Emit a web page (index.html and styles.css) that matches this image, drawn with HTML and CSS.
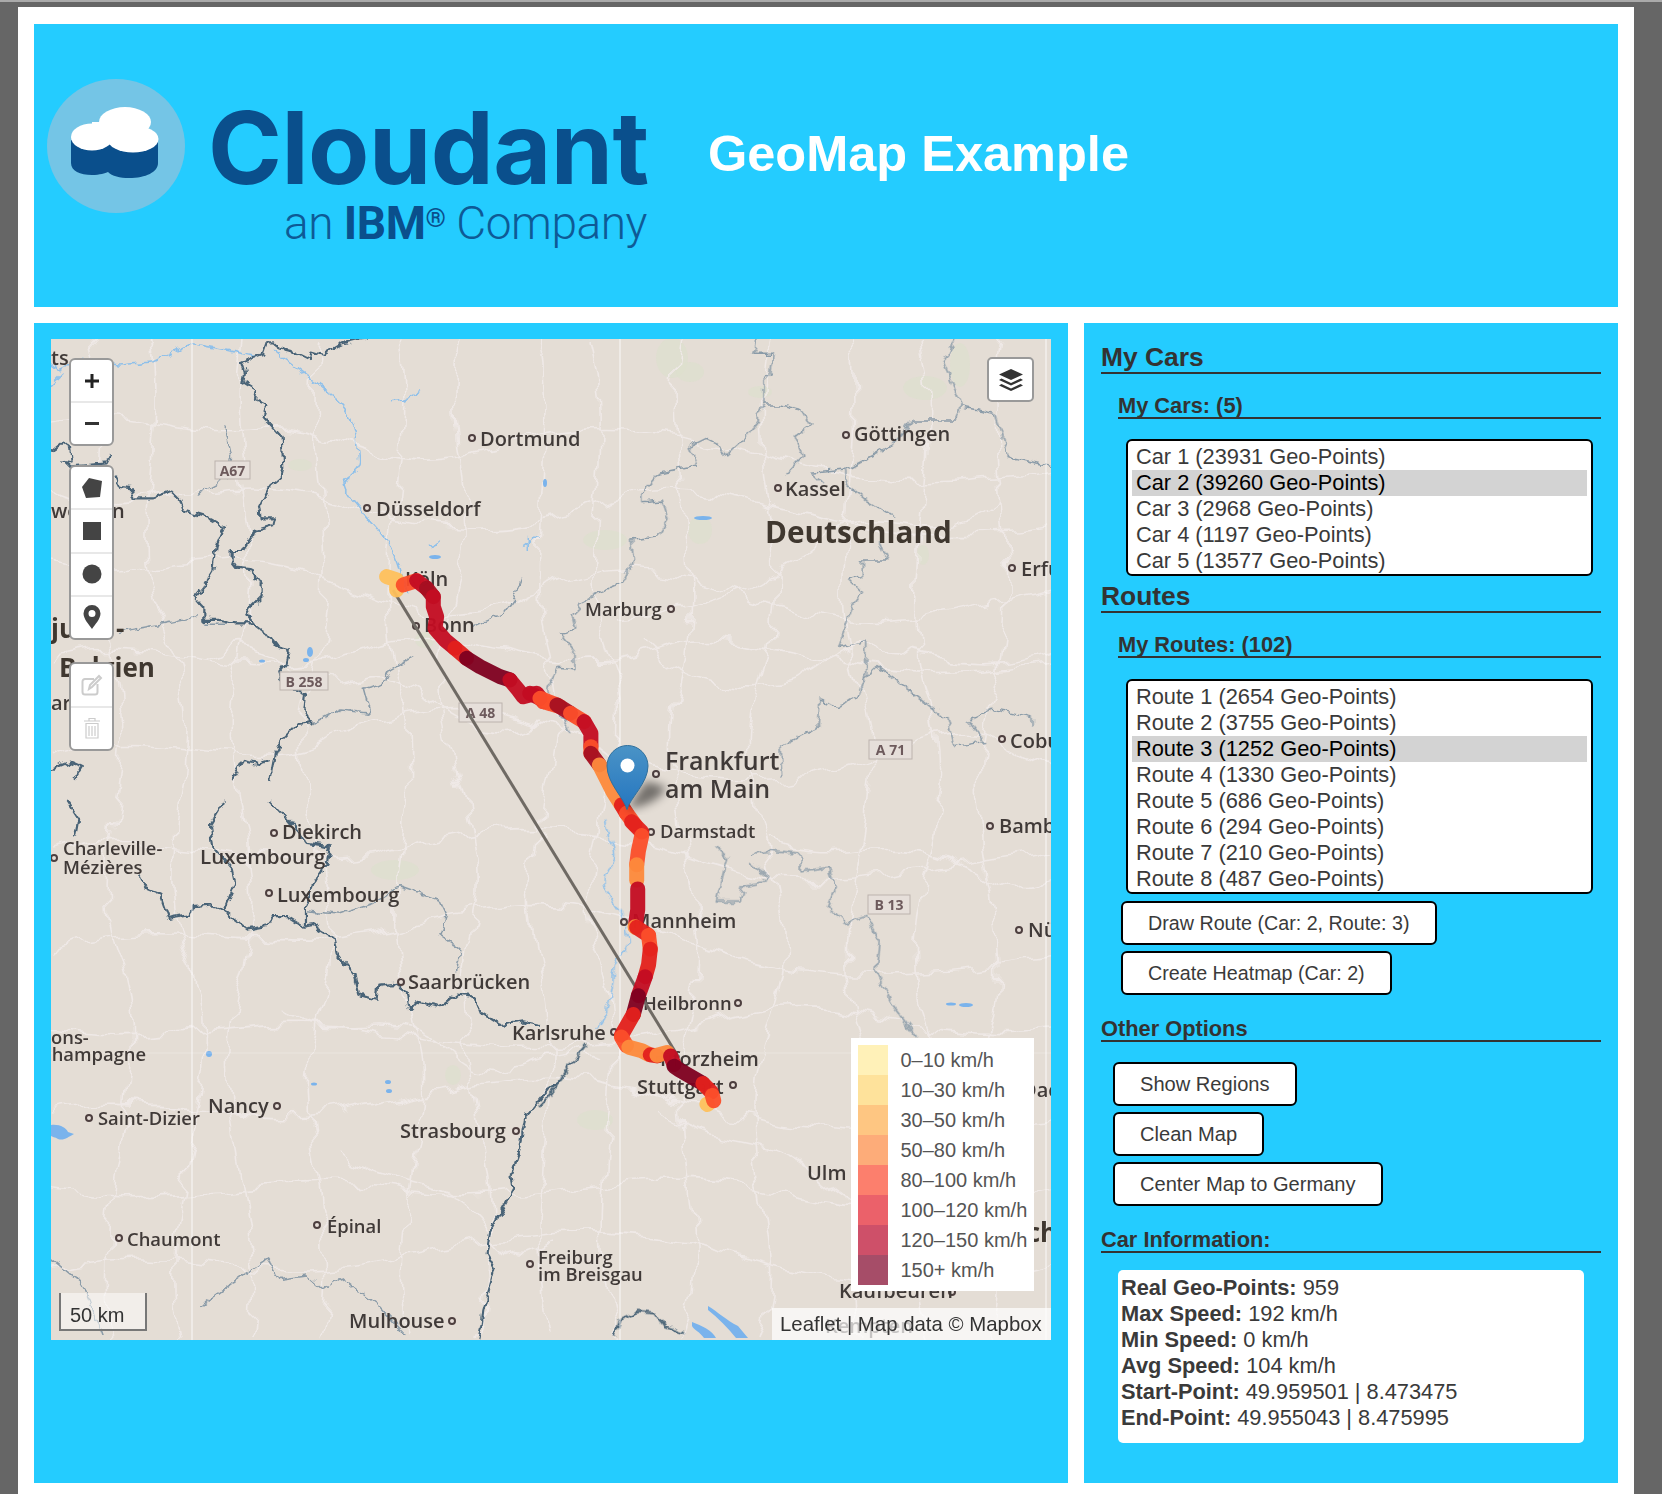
FILE: index.html
```html
<html>
<head>
    <title>Cloudant GeoMap Example</title>
    <link rel="stylesheet" href="styles.css">
</head>
<body>
<div class="page">
    <header class="banner">
        <svg class="logo" viewBox="34 24 674 283" width="674" height="283">
            <ellipse cx="116" cy="146" rx="69" ry="67" fill="#74c5e6"/>
            <path d="M71 140V163C71 171 80 175 92 175C100 175 105 173 108 172C112 176 120 178 129 178C146 178 158 172 158 163V140Z" fill="#0a4f8c"/>
            <ellipse cx="125" cy="122" rx="26" ry="15" fill="#fff"/>
            <ellipse cx="92" cy="137" rx="21" ry="13.500" fill="#fff"/>
            <ellipse cx="133" cy="139" rx="25.500" ry="13.500" fill="#fff"/>
            <rect x="92" y="122" width="40" height="22" fill="#fff"/>
            <text class="logo-name" x="208" y="184">Cloudant</text>
            <text class="logo-sub" x="284" y="239">an <tspan class="logo-ibm">IBM</tspan><tspan class="logo-reg" dy="-12">®</tspan><tspan dy="12"> Company</tspan></text>
        </svg>
        <h1 class="title">GeoMap Example</h1>
    </header>

    <div class="content">
        <section class="map-panel">
            <div class="map">
                <svg class="tiles" viewBox="51 339 1000 1001" width="1000" height="1001">
                    <defs>
                        <filter id="wiggle" x="-5%" y="-5%" width="110%" height="110%">
                            <feTurbulence type="fractalNoise" baseFrequency=".11" numOctaves="2" seed="4"/>
                            <feDisplacementMap in="SourceGraphic" scale="9" xChannelSelector="R" yChannelSelector="G"/>
                        </filter>
                        <filter id="wander" x="-5%" y="-5%" width="110%" height="110%">
                            <feTurbulence type="fractalNoise" baseFrequency=".035" numOctaves="2" seed="9"/>
                            <feDisplacementMap in="SourceGraphic" scale="26" xChannelSelector="R" yChannelSelector="G"/>
                        </filter>
                    </defs>
                    <rect x="51" y="339" width="1000" height="1001" fill="#e4ddd5"/>

                    <g class="green">
                        <ellipse cx="672" cy="358" rx="16" ry="20"/>
                        <ellipse cx="690" cy="372" rx="14" ry="10"/>
                        <ellipse cx="760" cy="392" rx="12" ry="6"/>
                        <ellipse cx="925" cy="388" rx="22" ry="12"/>
                        <ellipse cx="960" cy="365" rx="10" ry="22"/>
                        <ellipse cx="700" cy="530" rx="12" ry="14"/>
                        <ellipse cx="605" cy="540" rx="22" ry="10"/>
                        <ellipse cx="923" cy="555" rx="6" ry="10"/>
                        <ellipse cx="300" cy="465" rx="12" ry="6"/>
                        <ellipse cx="425" cy="640" rx="10" ry="8"/>
                        <ellipse cx="395" cy="870" rx="24" ry="10"/>
                        <ellipse cx="453" cy="1075" rx="8" ry="10"/>
                        <ellipse cx="595" cy="1120" rx="18" ry="10"/>
                    </g>

                    <g class="roads" filter="url(#wander)">
                        <path d="M51 420C120 405 190 440 260 430S380 480 470 455 600 420 700 440 860 500 1053 470"/>
                        <path d="M51 490C110 520 230 470 330 500S500 540 610 500 820 560 1053 530"/>
                        <path d="M51 560C130 590 220 540 300 570S440 640 520 600 640 560 760 600 900 620 1053 590"/>
                        <path d="M51 660C140 630 250 690 360 650S540 690 650 650 830 700 1053 660"/>
                        <path d="M51 760C150 720 240 780 330 740S480 700 560 730 720 810 860 760 980 740 1053 770"/>
                        <path d="M51 850C150 820 290 880 390 850S590 820 700 860 900 870 1053 850"/>
                        <path d="M51 950C160 910 280 960 390 930S560 890 660 930 830 990 1053 960"/>
                        <path d="M51 1030C150 1050 260 1010 370 1030S590 1060 720 1020 900 1050 1053 1030"/>
                        <path d="M51 1110C140 1090 250 1130 350 1110S530 1060 640 1090 840 1150 1053 1120"/>
                        <path d="M51 1190C170 1210 290 1170 400 1190S640 1160 760 1190 940 1210 1053 1190"/>
                        <path d="M51 1270C170 1240 270 1290 390 1260S620 1220 720 1250 900 1300 1053 1260"/>
                        <path d="M90 339C120 450 70 560 110 660S80 860 120 960 90 1200 110 1339"/>
                        <path d="M150 339C170 440 120 540 170 640S140 860 190 960 150 1200 180 1339"/>
                        <path d="M240 339C220 450 270 540 240 660S280 860 240 980 270 1200 250 1339"/>
                        <path d="M320 339C300 450 350 560 310 680S360 900 320 1010 350 1220 320 1339"/>
                        <path d="M400 339C420 450 370 560 400 680S370 900 410 1010 380 1220 410 1339"/>
                        <path d="M460 339C440 430 490 520 450 620S500 820 470 930 520 1180 480 1339"/>
                        <path d="M540 339C560 450 520 560 550 660S510 840 540 960 520 1200 550 1339"/>
                        <path d="M590 339C620 450 570 560 610 660S560 840 600 960 570 1200 620 1339"/>
                        <path d="M680 339C660 450 710 560 680 680S720 900 690 1020 720 1240 680 1339"/>
                        <path d="M770 339C740 460 800 560 760 680S820 900 770 1020 800 1240 760 1339"/>
                        <path d="M850 339C870 460 820 570 860 690S820 910 860 1030 830 1240 860 1339"/>
                        <path d="M920 339C950 450 890 580 930 700S880 920 930 1030 890 1230 930 1339"/>
                        <path d="M1000 339C980 460 1030 580 990 700S1020 920 990 1030 1020 1230 990 1339"/>
                        <path d="M620 620C700 610 760 590 820 540S930 560 1000 500"/>
                        <path d="M640 640C700 700 780 700 830 660S950 690 1053 650"/>
                        <path d="M210 660C260 620 300 700 360 680S460 760 540 720"/>
                        <path d="M770 840C830 870 880 830 950 860S1010 900 1053 880"/>
                        <path d="M660 1110C700 1150 760 1130 810 1170S870 1220 910 1200"/>
                        <path d="M280 1010C330 1050 400 1000 450 1050S540 1030 600 1060"/>
                        <path d="M340 1150C380 1190 440 1170 480 1220S520 1260 560 1240"/>
                    </g>

                    <g class="lakes">
                        <path d="M51 1125C60 1124 66 1128 68 1132L74 1134C68 1137 64 1141 58 1139C55 1137 52 1137 51 1136Z"/>
                        <path d="M708 1306C718 1312 726 1320 738 1326L748 1338H736C728 1328 718 1318 708 1310Z"/>
                        <path d="M692 1322C702 1326 712 1330 716 1338H704C700 1332 694 1330 692 1326Z"/>
                        <ellipse cx="209" cy="1054" rx="3" ry="3"/>
                        <ellipse cx="314" cy="1084" rx="3" ry="1.500"/>
                        <ellipse cx="388" cy="1082" rx="3" ry="2"/>
                        <ellipse cx="389" cy="1091" rx="3" ry="2"/>
                        <ellipse cx="951" cy="1004" rx="5" ry="1.500"/>
                        <ellipse cx="966" cy="1005" rx="7" ry="2"/>
                        <ellipse cx="310" cy="652" rx="3" ry="5"/>
                        <ellipse cx="306" cy="660" rx="3" ry="2"/>
                        <ellipse cx="262" cy="661" rx="3" ry="1.500"/>
                        <ellipse cx="703" cy="518" rx="9" ry="2"/>
                        <ellipse cx="545" cy="483" rx="2" ry="4"/>
                        <ellipse cx="435" cy="557" rx="6" ry="2"/>
                    </g>

                    <g filter="url(#wiggle)">
                        <g class="rivers" transform="translate(40 330) scale(.3333)">
                            <path d="M700 60C760 110 820 150 880 200S950 300 950 340 975 410 925 440 980 550 1030 620 1075 700 1100 790"/>
                            <path d="M33 100L60 120 120 90 240 105 340 95 450 40 560 60 650 80"/>
                            <path d="M30 170L70 130"/>
                            <path d="M1050 215C1080 215 1110 205 1140 185"/>
                            <path d="M1170 650C1185 648 1200 640 1205 635"/>
                            <path d="M1450 650L1490 620M1465 620V660"/>
                        </g>
                        <g class="rivers" transform="translate(540 820) scale(.3393 .3444)">
                            <path d="M190 0C200 70 240 100 200 150S240 250 250 300 270 360 240 390 220 450 210 500 190 570 170 600"/>
                        </g>
                        <g class="state" transform="translate(540 330) scale(.3393 .3333)">
                            <path d="M640 30L630 70 690 70 680 130 660 150 660 225 640 260 640 280 610 320 550 375 520 340 490 325 440 350 465 405 350 430 300 490 300 515 360 510 380 570 350 620 270 630 275 690 240 760 155 795 95 855 105 900 60 910 100 960 100 1020 55 1015 30 1060"/>
                            <path d="M660 225L710 225 770 240 795 285 750 320 775 380 730 430"/>
                            <path d="M1220 30L1190 100 1240 220 1225 270 1100 270 1040 345 900 420 800 430 830 460"/>
                            <path d="M900 420L910 470 960 510 1040 560"/>
                            <path d="M1240 230L1340 250 1380 380 1510 410"/>
                            <path d="M1000 640L1025 690 950 690 950 740 910 750 950 790 920 830 880 950 960 935 960 1040 990 1010 1100 1090 1200 1170 1220 1250 1310 1235 1260 1170 1330 1135 1450 1160 1450 1190"/>
                            <path d="M960 1040L940 1090 880 1130 825 1110 820 1190 710 1250 715 1340"/>
                            <path d="M30 1060C10 1100 60 1140 90 1210"/>
                        </g>
                        <g class="state" transform="translate(540 820) scale(.3393 .3444)">
                            <path d="M620 100L680 90 770 100 770 150 850 140 870 200 850 250 900 300 960 280 1000 350 990 440 1040 540 1110 630"/>
                            <path d="M620 125L670 160 660 180 600 190 590 235 520 235 550 110 520 80"/>
                        </g>
                        <g class="state" transform="translate(40 330) scale(.3333)">
                            <path d="M555 290L575 380 565 440 470 490"/>
                            <path d="M1445 745L1420 810 1390 850 1300 890"/>
                            <path d="M1120 980L1050 1020 1030 1060 970 1075 990 1150 900 1140 820 1180"/>
                            <path d="M490 880L640 880M240 905L350 885 470 860"/>
                        </g>
                        <g class="state" transform="translate(40 800) scale(.3333 .3571)">
                            <path d="M800 310L900 320 1000 290 1080 240 1200 280 1220 320 1200 380 1260 420 1250 480"/>
                            <path d="M35 1285L120 1350 150 1400 190 1500"/>
                            <path d="M480 1420L580 1350 680 1285 720 1340 800 1330 850 1370 900 1335 1010 1410 1100 1500"/>
                        </g>

                        <g class="border" transform="translate(40 330) scale(.3333)">
                            <path d="M605 95L615 130 610 155 650 180 645 210 680 225 670 260 725 320 730 410 725 440 690 470 660 530 665 565 705 565 700 585 650 600 610 660 575 660 575 690 590 710 635 715 640 745 665 760 665 800 635 830 620 855 640 880 680 910 710 950 750 960 740 1000 715 1030 725 1060 795 1090 790 1140 815 1180 770 1185 725 1230 705 1270 690 1350"/>
                            <path d="M605 95L670 70 680 40 700 40 720 55 760 65 810 90 815 65 850 75 900 45 950 32 980 30"/>
                            <path d="M225 440L240 470 275 475 285 505 340 505 395 485 420 510 430 540 510 565 555 590 530 650 520 720 490 770 465 800 490 830 490 870 540 870 590 880 640 880"/>
                            <path d="M33 365L70 335 90 350 95 395 70 390 90 410 200 400 215 370"/>
                            <path d="M30 1320L90 1295 125 1310 100 1350"/>
                            <path d="M575 1350L610 1290 660 1300 690 1290"/>
                        </g>
                        <g class="border" transform="translate(40 800) scale(.3333 .3571)">
                            <path d="M80 0L115 50 105 105"/>
                            <path d="M555 0L510 70 520 130 575 190 585 230 555 300 550 310 620 360 680 350 700 325 740 325 790 355 820 350 880 385 890 430 940 490 955 545 1010 560 1015 520 1060 515 1100 540 1110 585 1130 565 1200 580 1250 545 1300 550 1320 595 1380 630 1450 620 1500 630"/>
                            <path d="M300 215L320 250 360 265 385 330 450 320 460 300 520 295 550 310"/>
                            <path d="M690 0L730 40 800 120 870 130 860 180 820 235 795 300 795 355"/>
                            <path d="M1560 790L1520 815 1455 890 1440 980 1415 1050 1420 1090 1350 1210 1340 1270 1365 1310 1330 1430 1325 1470 1315 1510"/>
                        </g>
                        <g class="border" transform="translate(540 820) scale(.3393 .3444)">
                            <path d="M135 650C90 700 60 770 0 830"/>
                            <path d="M220 1500L235 1450 290 1425 340 1430 370 1470 430 1490"/>
                        </g>
                    </g>

                    <line class="seam" x1="192" y1="339" x2="192" y2="1340"/>
                    <line class="seam" x1="620" y1="339" x2="620" y2="1340"/>
                    <line class="seam" x1="1046" y1="339" x2="1046" y2="1340"/>
                    <line class="seam-soft" x1="51" y1="1053" x2="1051" y2="1053"/>

                    <g class="badges">
                        <rect x="215" y="461" width="35" height="18"/><text x="232.500" y="476">A67</text>
                        <rect x="280" y="672" width="48" height="18"/><text x="304" y="687">B 258</text>
                        <rect x="459" y="703" width="43" height="19"/><text x="480.500" y="718">A 48</text>
                        <rect x="869" y="740" width="43" height="19"/><text x="890.500" y="755">A 71</text>
                        <rect x="868" y="895" width="42" height="19"/><text x="889" y="910">B 13</text>
                    </g>

                    <g class="dots">
                        <circle cx="472" cy="438" r="3"/><circle cx="367" cy="508" r="3"/>
                        <circle cx="416" cy="626" r="3"/><circle cx="846" cy="435" r="3"/>
                        <circle cx="778" cy="488" r="3"/><circle cx="1012" cy="568" r="3"/>
                        <circle cx="671" cy="609" r="3"/><circle cx="656" cy="774" r="3"/>
                        <circle cx="1002" cy="739" r="3"/><circle cx="651" cy="832" r="3"/>
                        <circle cx="990" cy="826" r="3"/><circle cx="624" cy="922" r="3"/>
                        <circle cx="1019" cy="930" r="3"/><circle cx="738" cy="1003" r="3"/>
                        <circle cx="614" cy="1032" r="3"/><circle cx="659" cy="1059" r="3"/>
                        <circle cx="733" cy="1085" r="3"/><circle cx="952" cy="1292" r="3"/>
                        <circle cx="530" cy="1264" r="3"/><circle cx="274" cy="833" r="3"/>
                        <circle cx="269" cy="893" r="3"/><circle cx="54" cy="858" r="3"/>
                        <circle cx="401" cy="982" r="3"/><circle cx="89" cy="1118" r="3"/>
                        <circle cx="277" cy="1106" r="3"/><circle cx="516" cy="1131" r="3"/>
                        <circle cx="317" cy="1225" r="3"/><circle cx="119" cy="1238" r="3"/>
                        <circle cx="452" cy="1321" r="3"/>
                    </g>

                    <g class="labels">
                        <text x="51" y="365">ts</text>
                        <text x="51" y="518">we</text>
                        <text x="112" y="518">n</text>
                        <text x="51" y="710">ar</text>
                        <text x="480" y="446">Dortmund</text>
                        <text x="376" y="516">Düsseldorf</text>
                        <text x="405" y="586">Köln</text>
                        <text x="424" y="632">Bonn</text>
                        <text x="854" y="441">Göttingen</text>
                        <text x="785" y="496">Kassel</text>
                        <text x="1021" y="576">Erfurt</text>
                        <text class="small" x="585" y="616">Marburg</text>
                        <text x="1010" y="748">Coburg</text>
                        <text class="small" x="660" y="838">Darmstadt</text>
                        <text x="999" y="833">Bamberg</text>
                        <text x="632" y="928">Mannheim</text>
                        <text x="1028" y="937">Nürnberg</text>
                        <text class="small" x="643" y="1010">Heilbronn</text>
                        <text x="512" y="1040">Karlsruhe</text>
                        <text x="660" y="1066">Pforzheim</text>
                        <text x="637" y="1094">Stuttgart</text>
                        <text x="807" y="1180">Ulm</text>
                        <text x="1022" y="1097">Dachau</text>
                        <text x="839" y="1298">Kaufbeuren</text>
                        <text x="825" y="1333">Kempten</text>
                        <text x="282" y="839">Diekirch</text>
                        <text class="wide" x="200" y="864">Luxembourg</text>
                        <text x="277" y="902">Luxembourg</text>
                        <text x="408" y="989">Saarbrücken</text>
                        <text class="small" x="98" y="1125">Saint-Dizier</text>
                        <text x="208" y="1113">Nancy</text>
                        <text x="400" y="1138">Strasbourg</text>
                        <text class="small" x="327" y="1233">Épinal</text>
                        <text class="small" x="127" y="1246">Chaumont</text>
                        <text x="349" y="1328">Mulhouse</text>
                        <text class="small" x="63" y="855">Charleville-</text>
                        <text class="small" x="63" y="874">Mézières</text>
                        <text class="small" x="51" y="1044">ons-</text>
                        <text class="small" x="40" y="1061">Champagne</text>
                        <text class="small" x="538" y="1264">Freiburg</text>
                        <text class="small" x="538" y="1281">im Breisgau</text>
                        <text class="big" x="665" y="770">Frankfurt</text>
                        <text class="big" x="665" y="798">am Main</text>
                        <text class="country" x="765" y="543">Deutschland</text>
                        <text class="region" x="59" y="677">Belgien</text>
                        <text class="region" x="51" y="638">ju</text>
                        <text class="region" x="116" y="638">-</text>
                        <text class="region" x="968" y="1242">München</text>
                    </g>

                    <line class="track" x1="393" y1="590" x2="679" y2="1058"/>

                    <g class="route" transform="translate(40 330) scale(.3333)">
                        <path class="s6" d="M1040 740L1070 750 1070 780"/>
                        <path class="s4" d="M1090 765L1130 752"/>
                        <path class="s2" d="M1130 752L1160 775"/>
                        <path class="s1" d="M1160 775L1180 800"/>
                        <path class="s2" d="M1180 800L1180 830 1190 860 1185 895 1215 930 1245 955"/>
                        <path class="s3" d="M1245 955L1280 985"/>
                        <path class="s0" d="M1280 985L1320 1010 1380 1040 1410 1050"/>
                        <path class="s2" d="M1410 1050L1435 1080 1450 1100 1490 1090 1510 1115"/>
                        <path class="s4" d="M1510 1115L1560 1130"/>
                    </g>
                    <g class="route" transform="translate(540 330) scale(.3393 .3333)">
                        <path class="s2" d="M-30 1090L0 1105"/>
                        <path class="s4" d="M0 1105L50 1125"/>
                        <path class="s1" d="M50 1125L90 1150"/>
                        <path class="s4" d="M90 1150L130 1175"/>
                        <path class="s2" d="M130 1175L150 1210 150 1250"/>
                        <path class="s4" d="M150 1250L150 1270"/>
                        <path class="s1" d="M150 1270L175 1305"/>
                        <path class="s5" d="M175 1305L190 1335 215 1385 240 1425"/>
                        <path class="s3" d="M240 1425L255 1450"/>
                        <path class="s4" d="M255 1450L280 1485"/>
                    </g>
                    <g class="route" transform="translate(540 820) scale(.3393 .3444)">
                        <path class="s3" d="M270 5L300 35"/>
                        <path class="s4" d="M300 45L290 90 285 130"/>
                        <path class="s5" d="M285 130L285 175"/>
                        <path class="s2" d="M288 200L288 260 282 300"/>
                        <path class="s5" d="M280 310L282 312"/>
                        <path class="s3" d="M285 312L320 335"/>
                        <path class="s4" d="M320 335L325 375"/>
                        <path class="s3" d="M325 375L320 420 310 455"/>
                        <path class="s2" d="M310 455L290 510"/>
                        <path class="s0" d="M290 510L275 565"/>
                        <path class="s3" d="M275 565L240 625"/>
                        <path class="s4" d="M240 630L255 655"/>
                        <path class="s5" d="M262 660L300 670 320 680"/>
                        <path class="s3" d="M325 682L345 685"/>
                        <path class="s5" d="M345 683L375 675"/>
                        <path class="s2" d="M385 685L395 710"/>
                        <path class="s0" d="M395 715L410 725 480 765"/>
                        <path class="s3" d="M480 765L505 790"/>
                        <path class="s6" d="M492 825L494 826"/>
                        <path class="s4" d="M508 800L512 815"/>
                    </g>
                </svg>

                <div class="controls">
                    <div class="bar bar-zoom">
                        <a class="bar-btn"><svg width="14" height="14" viewBox="0 0 14 14"><path d="M5.500 0h3v5.500H14v3H8.500V14h-3V8.500H0v-3h5.500z" fill="#222"/></svg></a>
                        <a class="bar-btn"><svg width="14" height="3" viewBox="0 0 14 3"><rect width="14" height="3" fill="#333"/></svg></a>
                    </div>
                    <div class="bar bar-draw">
                        <a class="bar-btn"><svg width="22" height="22" viewBox="0 0 22 22"><path d="M8 1L21 4 19 20 5 21 1 10Z" fill="#444"/></svg></a>
                        <a class="bar-btn"><svg width="18" height="18" viewBox="0 0 18 18"><rect width="18" height="18" fill="#444"/></svg></a>
                        <a class="bar-btn"><svg width="20" height="20" viewBox="0 0 20 20"><circle cx="10" cy="10" r="9.500" fill="#444"/></svg></a>
                        <a class="bar-btn"><svg width="18" height="24" viewBox="0 0 18 24"><path fill-rule="evenodd" d="M9 0a8.500 8.500 0 0 1 8.500 8.500C17.500 14 12 19.500 9 24 6 19.500.5 14 .5 8.500A8.500 8.500 0 0 1 9 0zm0 5a3.500 3.500 0 1 0 0 7 3.500 3.500 0 0 0 0-7z" fill="#444"/></svg></a>
                    </div>
                    <div class="bar bar-edit">
                        <a class="bar-btn"><svg width="22" height="22" viewBox="0 0 22 22"><path d="M13 5H4a2.500 2.500 0 0 0-2.500 2.500V18A2.500 2.500 0 0 0 4 20.500h10a2.500 2.500 0 0 0 2.500-2.500V10M8 15l1-4L18 2l2 2-9 9z" fill="none" stroke="#ccc" stroke-width="2"/></svg></a>
                        <a class="bar-btn"><svg width="18" height="22" viewBox="0 0 18 22"><path d="M1 4h16M6 4V1.500h6V4M3 6.500h12V21H3zM6 9v10M9 9v10M12 9v10" fill="none" stroke="#ccc" stroke-width="1.200"/></svg></a>
                    </div>
                </div>

                <a class="layers"><svg width="24" height="22" viewBox="0 0 24 22"><path d="M12 0L24 5.500 12 11 0 5.500Z" fill="#333"/><path d="M2.500 9.500L12 14 21.500 9.500 24 11 12 16.500 0 11Z" fill="#333"/><path d="M2.500 15L12 19.500 21.500 15 24 16.500 12 22 0 16.500Z" fill="#333"/></svg></a>

                <svg class="marker" width="74" height="70" viewBox="0 0 74 70">
                    <defs>
                        <linearGradient id="pin" x1="0" y1="0" x2="0" y2="1">
                            <stop offset="0" stop-color="#4a93c6"/>
                            <stop offset="1" stop-color="#2576c0"/>
                        </linearGradient>
                        <filter id="pinShadow" x="-50%" y="-50%" width="200%" height="200%"><feGaussianBlur stdDeviation="5"/></filter>
                    </defs>
                    <path d="M21 64L40 36 60 42C56 54 38 62 21 64Z" fill="#000" opacity=".5" filter="url(#pinShadow)"/>
                    <path d="M21 64.500C18 53 1 38 1 21A20.500 20.500 0 0 1 42 21C42 38 24 53 21 64.500Z" fill="url(#pin)" stroke="#2f6f9c" stroke-width="1"/>
                    <circle cx="21.500" cy="20.500" r="7" fill="#fff"/>
                </svg>

                <div class="legend">
                    <div class="legend-row"><i class="swatch c1"></i>0–10 km/h</div>
                    <div class="legend-row"><i class="swatch c2"></i>10–30 km/h</div>
                    <div class="legend-row"><i class="swatch c3"></i>30–50 km/h</div>
                    <div class="legend-row"><i class="swatch c4"></i>50–80 km/h</div>
                    <div class="legend-row"><i class="swatch c5"></i>80–100 km/h</div>
                    <div class="legend-row"><i class="swatch c6"></i>100–120 km/h</div>
                    <div class="legend-row"><i class="swatch c7"></i>120–150 km/h</div>
                    <div class="legend-row"><i class="swatch c8"></i>150+ km/h</div>
                </div>

                <div class="scale">50 km</div>
                <div class="attribution">Leaflet | Map data © Mapbox</div>
            </div>
        </section>

        <aside class="side-panel">
            <h2>My Cars</h2>
            <div class="sub">
                <h3>My Cars: (5)</h3>
                <div class="listbox">
                    <div class="option">Car 1 (23931 Geo-Points)</div>
                    <div class="option selected">Car 2 (39260 Geo-Points)</div>
                    <div class="option">Car 3 (2968 Geo-Points)</div>
                    <div class="option">Car 4 (1197 Geo-Points)</div>
                    <div class="option">Car 5 (13577 Geo-Points)</div>
                </div>
            </div>

            <h2 class="routes-head">Routes</h2>
            <div class="sub">
                <h3>My Routes: (102)</h3>
                <div class="listbox routes-list">
                    <div class="option">Route 1 (2654 Geo-Points)</div>
                    <div class="option">Route 2 (3755 Geo-Points)</div>
                    <div class="option selected">Route 3 (1252 Geo-Points)</div>
                    <div class="option">Route 4 (1330 Geo-Points)</div>
                    <div class="option">Route 5 (686 Geo-Points)</div>
                    <div class="option">Route 6 (294 Geo-Points)</div>
                    <div class="option">Route 7 (210 Geo-Points)</div>
                    <div class="option">Route 8 (487 Geo-Points)</div>
                </div>
                <div class="buttons route-buttons">
                    <button>Draw Route (Car: 2, Route: 3)</button>
                    <button>Create Heatmap (Car: 2)</button>
                </div>
            </div>

            <h3 class="plain-head">Other Options</h3>
            <div class="buttons other-buttons">
                <button>Show Regions</button>
                <button>Clean Map</button>
                <button>Center Map to Germany</button>
            </div>

            <h3 class="plain-head">Car Information:</h3>
            <div class="info">
                <div><b>Real Geo-Points:</b> 959</div>
                <div><b>Max Speed:</b> 192 km/h</div>
                <div><b>Min Speed:</b> 0 km/h</div>
                <div><b>Avg Speed:</b> 104 km/h</div>
                <div><b>Start-Point:</b> 49.959501 | 8.473475</div>
                <div><b>End-Point:</b> 49.955043 | 8.475995</div>
            </div>
        </aside>
    </div>
</div>
</body>
</html>
```
FILE: styles.css
```css
body{
    margin: 0;
    padding: 5px 28px 0 18px;
    background-color: #666;
    border-top: 2px solid #aaa;
    font-family: "Liberation Sans", Arial, sans-serif;
    color: #3a3a3a;
}
.page{
    background-color: white;
    padding: 17px 16px 0 16px;
    height: 1487px;
    box-sizing: border-box;
}
.banner{
    background-color: #24ccff;
    height: 283px;
    display: flex;
}
.logo{
    flex: none;
}
.logo-name{
    font-family: Inter, sans-serif;
    font-weight: 700;
    font-size: 100px;
    letter-spacing: -.5px;
    fill: #0a4f8c;
}
.logo-sub{
    font-family: Roboto, sans-serif;
    font-weight: 300;
    font-size: 46px;
    letter-spacing: -.45px;
    fill: #0e5a96;
}
.logo-ibm{
    font-weight: 700;
    fill: #0a4f8c;
}
.logo-reg{
    font-size: 26px;
    font-weight: 700;
    fill: #0a4f8c;
}
.title{
    margin: 0;
    align-self: center;
    padding-bottom: 24px;
    font-size: 50.500px;
    color: white;
}
.content{
    display: flex;
    gap: 16px;
    margin-top: 16px;
}
.map-panel{
    background-color: #24ccff;
    width: 1034px;
    height: 1160px;
    box-sizing: border-box;
    padding: 16px 17px 0 17px;
}
.map{
    position: relative;
    width: 1000px;
    height: 1001px;
    overflow: hidden;
}
.tiles{
    display: block;
    filter: blur(.45px);
}
.green ellipse{
    fill: #dde0cd;
    opacity: .7;
}
.roads path{
    fill: none;
    stroke: #efe9e7;
    stroke-width: 1.600;
}
.lakes{
    fill: #7ab3ec;
}
.rivers path{
    fill: none;
    stroke: #8fc0ea;
    stroke-width: 1.500;
    vector-effect: non-scaling-stroke;
}
.state path{
    fill: none;
    stroke: #8a9ba8;
    stroke-width: 1.500;
    stroke-linejoin: round;
    vector-effect: non-scaling-stroke;
}
.border path{
    fill: none;
    stroke: #4a6477;
    stroke-width: 2.200;
    stroke-linejoin: round;
    vector-effect: non-scaling-stroke;
}
.seam{
    stroke: #fff;
    stroke-width: 1;
    opacity: .85;
}
.seam-soft{
    stroke: #fff;
    stroke-width: 1;
    opacity: .25;
}
.badges rect{
    fill: #e6dfda;
    stroke: #bcb3ae;
    stroke-width: 1;
}
.badges text{
    font-family: "Open Sans", sans-serif;
    font-weight: 700;
    font-size: 14px;
    text-anchor: middle;
    fill: #6d5a5c;
}
.dots circle{
    fill: #e7ded8;
    stroke: #4d3f3f;
    stroke-width: 2;
}
.labels text{
    font-family: "Open Sans", sans-serif;
    font-weight: 600;
    font-size: 20px;
    fill: #403a38;
}
.labels .small{
    font-size: 18.400px;
}
.labels .wide{
    font-size: 20.500px;
}
.labels .big{
    font-size: 25px;
}
.labels .region{
    font-weight: 700;
    font-size: 26px;
    fill: #3f372f;
}
.labels .country{
    font-weight: 700;
    font-size: 29.700px;
    fill: #3f372f;
}
.track{
    stroke: #6f6a64;
    stroke-width: 3;
}
.route path{
    fill: none;
    stroke-width: 15;
    stroke-linecap: round;
    stroke-linejoin: round;
    vector-effect: non-scaling-stroke;
    opacity: .95;
}
.s0{ stroke: #7f0020; }
.s1{ stroke: #a50f20; }
.s2{ stroke: #c30c22; }
.s3{ stroke: #e3201c; }
.s4{ stroke: #fb4e2a; }
.s5{ stroke: #fd8a3c; }
.s6{ stroke: #fec05c; }
.controls{
    position: absolute;
    left: 18px;
    top: 19px;
    display: flex;
    flex-direction: column;
}
.bar{
    display: flex;
    flex-direction: column;
    width: 45px;
    box-sizing: border-box;
    background-color: white;
    border: 2px solid #999;
    border-radius: 6px;
}
.bar-zoom{
    height: 88px;
}
.bar-draw{
    height: 175px;
    margin-top: 19px;
}
.bar-edit{
    height: 89px;
    margin-top: 22px;
}
.bar-btn{
    flex: 1;
    display: flex;
    align-items: center;
    justify-content: center;
    border-bottom: 2px solid #e8e8e8;
}
.bar-btn:last-child{
    border-bottom: none;
}
.layers{
    position: absolute;
    left: 936px;
    top: 18px;
    width: 47px;
    height: 45px;
    box-sizing: border-box;
    display: flex;
    align-items: center;
    justify-content: center;
    background-color: white;
    border: 2px solid #999;
    border-radius: 5px;
}
.marker{
    position: absolute;
    left: 555px;
    top: 406px;
}
.legend{
    position: absolute;
    left: 800px;
    top: 699px;
    width: 183px;
    height: 253px;
    box-sizing: border-box;
    padding: 7px 0 0 7px;
    background-color: white;
    font-size: 20px;
    color: #555;
}
.legend-row{
    display: flex;
    align-items: center;
    gap: 12.500px;
    height: 30px;
}
.swatch{
    width: 30px;
    height: 30px;
}
.c1{ background-color: #fff1b8; }
.c2{ background-color: #fee29b; }
.c3{ background-color: #fec682; }
.c4{ background-color: #fdac79; }
.c5{ background-color: #fc7f6d; }
.c6{ background-color: #eb616a; }
.c7{ background-color: #ce5069; }
.c8{ background-color: #a64d68; }
.scale{
    position: absolute;
    left: 8px;
    top: 954px;
    width: 88px;
    height: 38px;
    box-sizing: border-box;
    padding: 10px 0 0 9px;
    background-color: rgba(255, 255, 255, .5);
    border: 2px solid #777;
    border-top: none;
    font-size: 20px;
    line-height: 24px;
    color: #333;
}
.attribution{
    position: absolute;
    right: 0;
    bottom: 0;
    width: 279px;
    height: 32px;
    box-sizing: border-box;
    padding-left: 8px;
    background-color: rgba(255, 255, 255, .7);
    font-size: 20.400px;
    line-height: 32px;
    color: #333;
}
.side-panel{
    background-color: #24ccff;
    width: 534px;
    height: 1160px;
    box-sizing: border-box;
    padding: 19px 17px 0 17px;
}
h2{
    margin: 0;
    font-size: 26.400px;
    line-height: 30px;
    border-bottom: 2px solid #333;
    color: #333;
}
.routes-head{
    margin-top: 5px;
}
h3{
    margin: 21px 0 0 0;
    font-size: 21.800px;
    line-height: 22px;
    border-bottom: 2px solid #333;
    color: #333;
}
.plain-head{
    margin-top: 23px;
}
.sub{
    margin-left: 17px;
}
.listbox{
    margin: 20px 8px 0 8px;
    padding: 3px 4px 0 4px;
    background-color: white;
    border: 2px solid black;
    border-radius: 6px;
}
.routes-list{
    margin-top: 21px;
}
.option{
    height: 26px;
    line-height: 26px;
    padding-left: 4px;
    font-size: 21.800px;
    white-space: nowrap;
}
.selected{
    background-color: #d3d3d3;
    color: black;
}
.buttons{
    display: flex;
    flex-direction: column;
    align-items: flex-start;
    gap: 6px;
}
.route-buttons{
    margin: 7px 0 0 3px;
}
.route-buttons button{
    font-size: 19.700px;
}
.other-buttons{
    margin: 20px 0 0 12px;
}
button{
    height: 44px;
    padding: 0 25px;
    background-color: white;
    border: 2px solid black;
    border-radius: 6px;
    font-family: "Liberation Sans", Arial, sans-serif;
    font-size: 20.100px;
    color: #3a3a3a;
}
.info{
    margin: 17px 17px 0 17px;
    height: 173px;
    box-sizing: border-box;
    padding: 5px 3px;
    background-color: white;
    border-radius: 5px;
    font-size: 21.800px;
    line-height: 26px;
    white-space: nowrap;
}
```
